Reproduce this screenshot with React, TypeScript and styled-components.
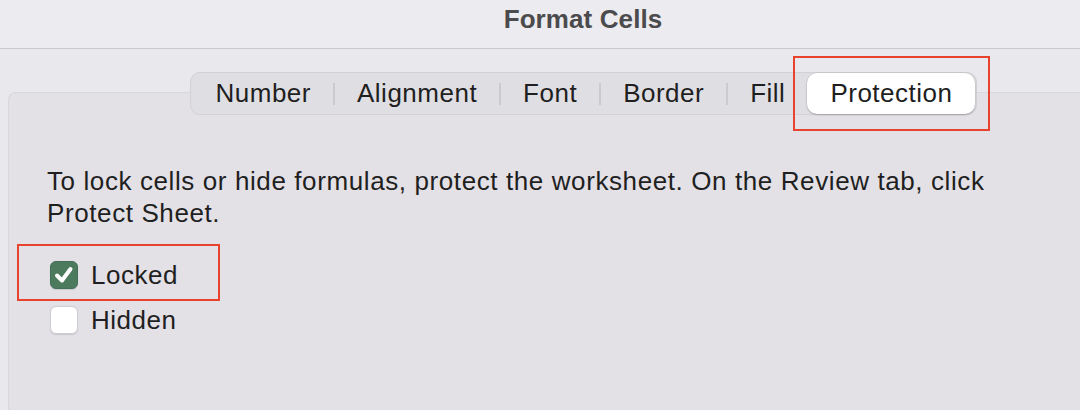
import React from "react";
import styled, { createGlobalStyle } from "styled-components";

const GlobalStyle = createGlobalStyle`
  html, body {
    margin: 0;
    padding: 0;
    background: #e9e8ec;
    overflow: hidden;
  }
  body {
    font-family: "Liberation Sans", Arial, sans-serif;
    color: #1e1e1e;
  }
`;

// the dialog is wider than the crop, so its centre sits right of the frame's
const CENTER_SHIFT = "86px";

const Window = styled.div`
  width: 100%;
  height: 410px;
  background: #e9e8ec;
  display: flex;
  flex-direction: column;
`;

const TitleBar = styled.div`
  height: 48px;
  background: #ecebef;
  border-bottom: 1px solid #cac9cd;
  display: flex;
  align-items: center;
  justify-content: center;
  padding-left: ${CENTER_SHIFT};
  box-sizing: content-box;
`;

const Title = styled.h1`
  margin: 0;
  font-size: 26px;
  font-weight: 700;
  color: #4b4b4d;
  letter-spacing: 0.1px;
  padding-bottom: 9px;
`;

const Panel = styled.div`
  margin: 43px 0 0 8px;
  flex: 1;
  background: #e3e1e6;
  border-top: 1px solid #d8d7db;
  border-left: 1px solid #d8d7db;
  border-radius: 8px 0 0 0;
  display: flex;
  flex-direction: column;
`;

const TabBarRow = styled.div`
  display: flex;
  justify-content: center;
  margin-top: -21px;
  padding-left: calc(${CENTER_SHIFT} - 8px);
`;

const TabBar = styled.div`
  display: flex;
  align-items: center;
  height: 41px;
  padding: 0 1px 0 3px;
  background: #dfdee3;
  border: 1px solid #d2d1d5;
  border-radius: 10px;
`;

const Tab = styled.div<{ $active?: boolean }>`
  position: relative;
  height: 41px;
  padding: 0 ${(p) => (p.$active ? "23px" : "22px")};
  display: flex;
  align-items: center;
  font-size: 26px;
  letter-spacing: 0.5px;
  color: #1f1f1f;
  background: ${(p) => (p.$active ? "#ffffff" : "transparent")};
  border-radius: 10px;
  box-shadow: ${(p) =>
    p.$active ? "0 1px 2px rgba(0,0,0,0.22), 0 0 0 0.5px rgba(0,0,0,0.08)" : "none"};
  box-sizing: border-box;
`;

const Separator = styled.span`
  width: 2px;
  height: 22px;
  background: #cbcacf;
`;

const Highlight = styled.div<{ $inset: string }>`
  position: absolute;
  inset: ${(p) => p.$inset};
  border: 2.5px solid #e8432d;
  pointer-events: none;
`;

const Content = styled.div`
  padding: 50px 0 0 38px;
  display: flex;
  flex-direction: column;
`;

const Description = styled.p`
  margin: 0;
  font-size: 26px;
  line-height: 32px;
  letter-spacing: 0.6px;
  width: 990px;
  color: #1f1f1f;
`;

const Options = styled.div`
  margin-top: 32px;
  display: flex;
  flex-direction: column;
  gap: 17px;
  padding-left: 3px;
`;

const OptionRow = styled.label`
  position: relative;
  display: flex;
  align-items: center;
  gap: 13px;
  height: 28px;
  font-size: 26px;
  letter-spacing: 0.5px;
  color: #1f1f1f;
  width: fit-content;
`;

const Box = styled.span<{ $checked?: boolean }>`
  width: 28px;
  height: 28px;
  border-radius: 6px;
  box-sizing: border-box;
  display: flex;
  align-items: center;
  justify-content: center;
  background: ${(p) => (p.$checked ? "#4b7a5c" : "#ffffff")};
  border: 1px solid ${(p) => (p.$checked ? "#44705a" : "#cfced3")};
  box-shadow: 0 0.5px 1px rgba(0, 0, 0, 0.12);
`;

const tabs = ["Number", "Alignment", "Font", "Border", "Fill"];

function Checkbox({ checked }: { checked?: boolean }) {
  return (
    <Box $checked={checked}>
      {checked && (
        <svg width="24" height="24" viewBox="0 0 24 24">
          <path
            d="M5 12.5 L10 17.5 L18.5 6"
            fill="none"
            stroke="#ffffff"
            strokeWidth="4"
            strokeLinecap="round"
            strokeLinejoin="round"
          />
        </svg>
      )}
    </Box>
  );
}

const App = () => {
  return (
    <>
      <GlobalStyle />
      <Window>
        <TitleBar>
          <Title>Format Cells</Title>
        </TitleBar>
        <Panel>
          <TabBarRow>
            <TabBar>
              {tabs.map((t, i) => (
                <React.Fragment key={t}>
                  <Tab>{t}</Tab>
                  {i < tabs.length - 1 && <Separator />}
                </React.Fragment>
              ))}
              <Tab $active>
                Protection
                <Highlight $inset="-17px -15px -17px -14px" />
              </Tab>
            </TabBar>
          </TabBarRow>
          <Content>
            <Description>
              To lock cells or hide formulas, protect the worksheet. On the Review tab, click
              Protect Sheet.
            </Description>
            <Options>
              <OptionRow>
                <Checkbox checked />
                Locked
                <Highlight $inset="-17px -42px -12px -33px" />
              </OptionRow>
              <OptionRow>
                <Checkbox />
                Hidden
              </OptionRow>
            </Options>
          </Content>
        </Panel>
      </Window>
    </>
  );
};

export default App;
